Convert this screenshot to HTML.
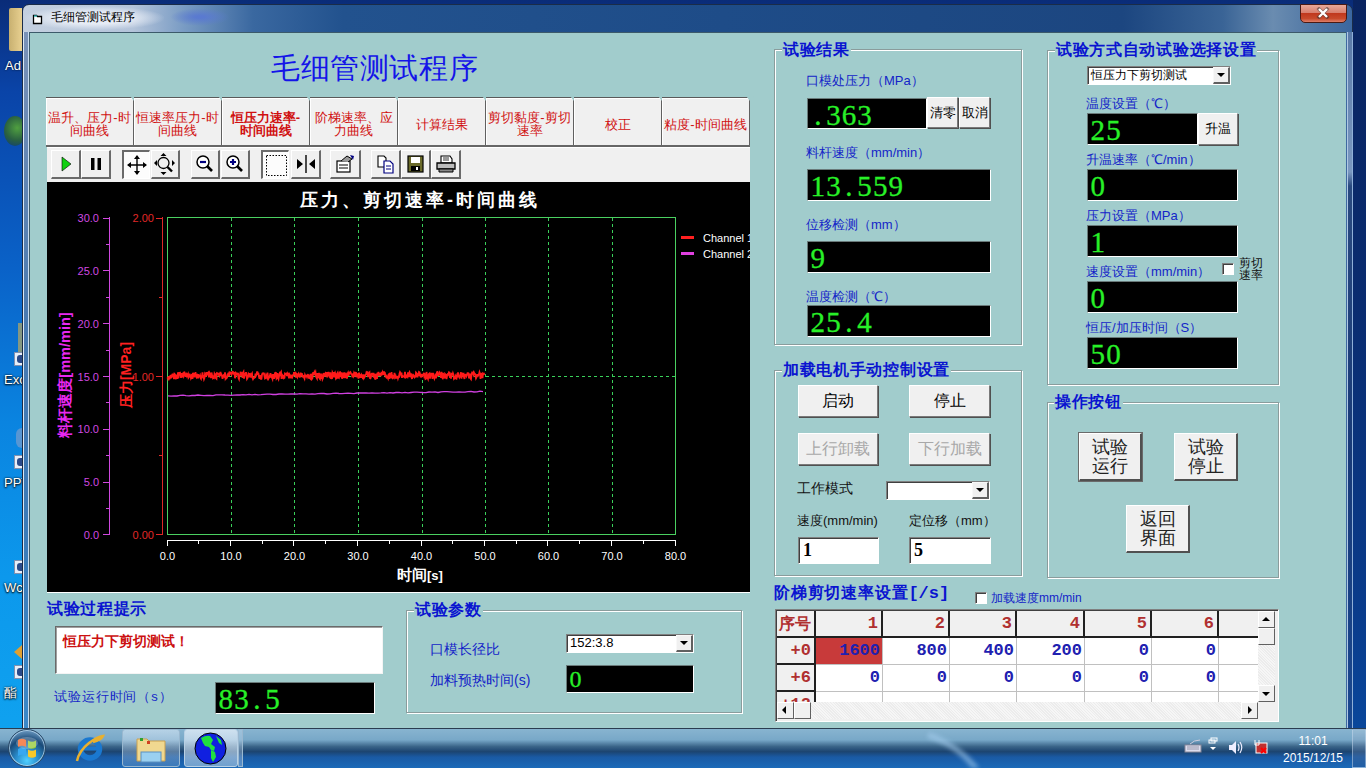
<!DOCTYPE html>
<html><head><meta charset="utf-8"><title>毛细管测试程序</title><style>
*{margin:0;padding:0;box-sizing:border-box}
html,body{width:1366px;height:768px;overflow:hidden}
body{position:relative;background:#0b3d9a;font-family:"Liberation Sans",sans-serif;}
.a{position:absolute}
#desk{left:0;top:0;width:1366px;height:768px;background:linear-gradient(180deg,#0a2c78 0%,#0a44a8 12%,#0a62c8 35%,#0a84e0 55%,#0c98ec 75%,#10a4f0 100%)}
#win{left:22px;top:4px;width:1331px;height:740px;border-radius:7px 7px 0 0;
 background:linear-gradient(90deg,#c4d0e0 0px,#b4c4da 110px,#7a9cc4 160px,#3a68a0 230px,#22528e 320px,#1e4c88 700px,#1c4680 1100px,#3a6496 1200px,#6a8cb0 1250px,#4a72a2 1300px,#3a66a0 1331px);border-top:1px solid #9ab4d4;
 border:1px solid #1a2c48}
#winL{left:23px;top:32px;width:6px;height:700px;border-left:1px solid #dce8f4;border-right:1px solid #c8dcf0;background:linear-gradient(180deg,#7a92b8 0%,#4a7ab0 40%,#3a7ab8 70%,#3a88c8 100%)}
#winR{left:1347px;top:32px;width:6px;height:700px;border-left:1px solid #b0c8e4;border-right:1px solid #90b0d8;background:linear-gradient(180deg,#5a7aa8 0%,#7a98c0 20%,#2a4a80 22%,#183a78 60%,#1a4890 100%)}
#deskR{left:1353px;top:0;width:13px;height:768px;background:linear-gradient(180deg,#0a2460 0%,#0a2c70 40%,#0a3c8c 80%,#0a4aa0 100%)}
#client{left:29px;top:32px;width:1317px;height:696px;background:#a1cccc;border-top:1px solid #3c5a6a;border-left:1px solid #3c5a6a}
#close{left:1300px;top:4px;width:47px;height:19px;border-radius:0 0 5px 5px;border:1px solid #4a1a14;
 background:linear-gradient(180deg,#e8a898 0%,#d88070 45%,#c0381e 50%,#c84a2c 80%,#e0806a 100%)}
#taskbar{left:0;top:728px;width:1366px;height:40px;border-top:1px solid #2a3c50;
 background:linear-gradient(180deg,#88b4d0 0%,#78a8c8 28%,#3a6488 45%,#1c4470 58%,#1a5aa4 72%,#1c6ab8 100%)}
.grp{position:absolute;border:1px solid #8a9c9c;box-shadow:inset 1px 1px 0 #fff,1px 1px 0 #fff}
.gt{position:absolute;background:#a1cccc;color:#0a14d0;font-weight:bold;font-size:16px;line-height:17px;padding:0 1px;white-space:nowrap;letter-spacing:0.7px}
.lbl{position:absolute;color:#1424c8;font-size:13px;line-height:16px;white-space:nowrap}
.disp{position:absolute;background:#000;border-top:1px solid #6a7a7a;border-left:1px solid #6a7a7a;border-right:1px solid #fff;border-bottom:1px solid #fff;color:#28f028;font-family:"Liberation Serif",serif;font-size:29px;line-height:33px;padding-left:2px;-webkit-text-stroke:0.3px #28f028;white-space:nowrap;overflow:hidden}
.disp span{display:inline-block;width:15.6px;text-align:center}
.btn{position:absolute;background:#f0f0f0;border-top:1px solid #fff;border-left:1px solid #fff;border-right:1px solid #7a7a7a;border-bottom:1px solid #7a7a7a;box-shadow:1px 1px 0 #505050;color:#000;text-align:center;white-space:nowrap;display:flex;align-items:center;justify-content:center}
.tab{position:absolute;top:97px;height:49px;background:#f0f0f0;border-top:1px solid #5a5a5a;border-right:1px solid #606060;box-shadow:inset 1px 1px 0 #fff;color:#d01010;font-size:13px;line-height:13px;text-align:center;display:flex;align-items:center;justify-content:center;white-space:nowrap;overflow:hidden}
.tb{position:absolute;top:150px;height:29px;background:#f0f0f0;border-top:1px solid #fff;border-left:1px solid #fff;border-right:2px solid #6a6a6a;border-bottom:2px solid #6a6a6a;display:flex;align-items:center;justify-content:center}
.tbp{background:#fcfcfc;border-top:2px solid #6a6a6a;border-left:2px solid #6a6a6a;border-right:1px solid #fff;border-bottom:1px solid #fff}
.combo{position:absolute;background:#fff;border-top:1px solid #808080;border-left:1px solid #808080;border-right:1px solid #fff;border-bottom:1px solid #fff;box-shadow:inset 1px 1px 0 #404040;font-size:12px;line-height:16px;white-space:nowrap;padding-left:3px;color:#000}
.combo i{position:absolute;right:0px;top:0px;bottom:0px;width:17px;background:#f0f0f0;border-top:1px solid #f8f8f8;border-left:1px solid #f8f8f8;border-right:2px solid #606060;border-bottom:2px solid #606060}
.combo i:after{content:"";position:absolute;left:3px;top:5px;border-left:4px solid transparent;border-right:4px solid transparent;border-top:4px solid #000}
.edit{position:absolute;background:#fff;border-top:1px solid #808080;border-left:1px solid #808080;border-right:1px solid #fff;border-bottom:1px solid #fff;box-shadow:inset 1px 1px 0 #404040;font-family:"Liberation Serif",serif;font-weight:bold;font-size:18px;line-height:24px;padding-left:4px;color:#000}
.chk{position:absolute;width:12px;height:12px;background:#fff;border-top:1px solid #808080;border-left:1px solid #808080;border-right:1px solid #fff;border-bottom:1px solid #fff;box-shadow:inset 1px 1px 0 #404040}
.gc{position:absolute;border-right:1px solid #c0c0c0;border-bottom:1px solid #c0c0c0;background:#fff;color:#2020b0;font-family:"Liberation Mono",monospace;font-weight:bold;font-size:17px;line-height:26px;text-align:right;padding-right:2px;white-space:nowrap;overflow:hidden}
.gh{position:absolute;background:#f0f0f0;border-right:2px solid #202020;border-bottom:2px solid #202020;color:#b03030;font-family:"Liberation Mono",monospace;font-weight:bold;font-size:17px;line-height:26px;text-align:right;padding-right:3px;white-space:nowrap;overflow:hidden}
.sb{position:absolute;background:#f0f0f0;border-top:1px solid #fff;border-left:1px solid #fff;border-right:1px solid #606060;border-bottom:1px solid #606060}
</style></head><body>
<div class="a" id="desk"></div><div class="a" id="deskR"></div>
<div class="a" style="left:9px;top:8px;width:13px;height:43px;background:linear-gradient(90deg,#c8b070,#e8d090);border-radius:2px 0 0 2px"></div>
<div class="a" style="left:5px;top:58px;color:#fff;font-size:13px;line-height:15px;text-shadow:0 0 2px #000">Ad</div>
<div class="a" style="left:4px;top:116px;width:22px;height:30px;border-radius:50%;background:radial-gradient(circle at 60% 40%,#50a040,#2a6040 55%,#0a3a80)"></div>
<div class="a" style="left:14px;top:352px;width:9px;height:14px;background:#e8eef8;border:1px solid #8090b0"></div>
<div class="a" style="left:17px;top:355px;width:5px;height:8px;background:#2a4a8a;border-radius:3px 0 0 3px"></div>
<div class="a" style="left:4px;top:372px;color:#fff;font-size:13px;line-height:15px;text-shadow:0 0 2px #000,0 1px 2px #000">Exc</div>
<div class="a" style="left:14px;top:455px;width:9px;height:14px;background:#e8eef8;border:1px solid #8090b0"></div>
<div class="a" style="left:17px;top:458px;width:5px;height:8px;background:#2a4a8a;border-radius:3px 0 0 3px"></div>
<div class="a" style="left:4px;top:475px;color:#fff;font-size:13px;line-height:15px;text-shadow:0 0 2px #000,0 1px 2px #000">PPT</div>
<div class="a" style="left:14px;top:560px;width:9px;height:14px;background:#e8eef8;border:1px solid #8090b0"></div>
<div class="a" style="left:17px;top:563px;width:5px;height:8px;background:#2a4a8a;border-radius:3px 0 0 3px"></div>
<div class="a" style="left:4px;top:580px;color:#fff;font-size:13px;line-height:15px;text-shadow:0 0 2px #000,0 1px 2px #000">Wc</div>
<div class="a" style="left:14px;top:665px;width:9px;height:14px;background:#e8eef8;border:1px solid #8090b0"></div>
<div class="a" style="left:17px;top:668px;width:5px;height:8px;background:#2a4a8a;border-radius:3px 0 0 3px"></div>
<div class="a" style="left:4px;top:685px;color:#fff;font-size:13px;line-height:15px;text-shadow:0 0 2px #000,0 1px 2px #000">酯</div>
<div class="a" style="left:18px;top:323px;width:4px;height:29px;background:#b8a860;opacity:.7"></div>
<div class="a" style="left:14px;top:645px;width:0;height:0;border-top:7px solid transparent;border-bottom:7px solid transparent;border-right:8px solid #e0a030"></div>
<div class="a" style="left:16px;top:428px;width:6px;height:20px;background:#6a9ad0;border-radius:6px 0 0 6px;opacity:.8"></div>
<div class="a" id="win"></div>
<div class="a" id="winL"></div><div class="a" id="winR"></div>
<div class="a" style="left:24px;top:6px;width:140px;height:24px;background:radial-gradient(ellipse at 50% 50%,rgba(235,240,248,.9) 35%,rgba(220,228,240,0) 72%)"></div>
<div class="a" style="left:170px;top:8px;width:60px;height:18px;background:radial-gradient(ellipse,#5a7ad0 10%,rgba(60,90,160,0) 70%)"></div>
<svg class="a" style="left:32px;top:13px" width="12" height="12" viewBox="0 0 12 12"><path d="M1.5 2.5h3l1 1h4v7h-8z" fill="#fff" stroke="#000" stroke-width="1.3"/><path d="M2 3h3" stroke="#3cc" stroke-width="1.2"/></svg>
<div class="a" style="left:51px;top:10px;color:#000;font-size:12px;line-height:14px;white-space:nowrap">毛细管测试程序</div>
<div class="a" id="close"></div>
<svg class="a" style="left:1316px;top:7px" width="14" height="12" viewBox="0 0 14 12"><path d="M3 2l8 8M11 2l-8 8" stroke="#333" stroke-width="3.6" stroke-linecap="square" opacity=".5"/><path d="M3 2l8 8M11 2l-8 8" stroke="#fff" stroke-width="2.4"/></svg>
<div class="a" id="client"></div>
<div class="a" style="left:271px;top:52px;color:#1414e8;font-size:29px;line-height:33px;white-space:nowrap;letter-spacing:0.6px">毛细管测试程序</div>
<div class="tab" style="left:46px;width:88px;"><div style="padding-top:4px">温升、压力-时<br>间曲线</div></div>
<div class="a" style="left:130px;top:96px;width:0;height:0;border-left:4px solid transparent;border-right:4px solid transparent;border-top:5px solid #a1cccc"></div>
<div class="tab" style="left:134px;width:88px;"><div style="padding-top:4px">恒速率压力-时<br>间曲线</div></div>
<div class="a" style="left:218px;top:96px;width:0;height:0;border-left:4px solid transparent;border-right:4px solid transparent;border-top:5px solid #a1cccc"></div>
<div class="tab" style="left:222px;width:88px;font-weight:bold;"><div style="padding-top:4px">恒压力速率-<br>时间曲线</div></div>
<div class="a" style="left:306px;top:96px;width:0;height:0;border-left:4px solid transparent;border-right:4px solid transparent;border-top:5px solid #a1cccc"></div>
<div class="tab" style="left:310px;width:88px;"><div style="padding-top:4px">阶梯速率、应<br>力曲线</div></div>
<div class="a" style="left:394px;top:96px;width:0;height:0;border-left:4px solid transparent;border-right:4px solid transparent;border-top:5px solid #a1cccc"></div>
<div class="tab" style="left:398px;width:88px;"><div style="padding-top:4px">计算结果</div></div>
<div class="a" style="left:482px;top:96px;width:0;height:0;border-left:4px solid transparent;border-right:4px solid transparent;border-top:5px solid #a1cccc"></div>
<div class="tab" style="left:486px;width:88px;"><div style="padding-top:4px">剪切黏度-剪切<br>速率</div></div>
<div class="a" style="left:570px;top:96px;width:0;height:0;border-left:4px solid transparent;border-right:4px solid transparent;border-top:5px solid #a1cccc"></div>
<div class="tab" style="left:574px;width:88px;"><div style="padding-top:4px">校正</div></div>
<div class="a" style="left:658px;top:96px;width:0;height:0;border-left:4px solid transparent;border-right:4px solid transparent;border-top:5px solid #a1cccc"></div>
<div class="tab" style="left:662px;width:88px;"><div style="padding-top:4px">粘度-时间曲线</div></div>
<div class="a" style="left:746px;top:96px;width:0;height:0;border-left:4px solid transparent;border-right:4px solid transparent;border-top:5px solid #a1cccc"></div>
<div class="a" style="left:42px;top:96px;width:0;height:0;border-left:4px solid #a1cccc;border-bottom:4px solid transparent;border-top:0"></div>
<div class="a" style="left:46px;top:145px;width:704px;height:2px;background:#666"></div>
<div class="a" style="left:47px;top:147px;width:703px;height:35px;background:#f0f0f0;border-top:1px solid #fff"></div>
<div class="tb" style="left:51px;width:30px;"><svg width="14" height="18" viewBox="0 0 14 18"><path d="M3 2v14l9-7z" fill="#10d010" stroke="#000" stroke-width=".6"/></svg></div>
<div class="tb" style="left:81px;width:30px;"><svg width="14" height="18" viewBox="0 0 14 18"><rect x="2" y="3" width="3.5" height="12" fill="#000"/><rect x="8.5" y="3" width="3.5" height="12" fill="#000"/></svg></div>
<div class="tb tbp" style="left:122px;width:28px;"><svg width="22" height="22" viewBox="0 0 22 22"><path d="M11 2v18M2 11h18" stroke="#000" stroke-width="1.4"/><path d="M11 1l-3 4h6zM11 21l-3-4h6zM1 11l4-3v6zM21 11l-4-3v6z" fill="#000"/></svg></div>
<div class="tb" style="left:151px;width:29px;"><svg width="24" height="24" viewBox="0 0 24 24"><circle cx="10.5" cy="11" r="5.5" fill="none" stroke="#000" stroke-width="1.3"/><path d="M14.5 15l4.5 4.5" stroke="#000" stroke-width="2.4"/><path d="M10.5 1l-3 3h6zM10.5 23l-3-3h6zM1 11l3-3v6zM22 11l-3-3v6z" fill="#000"/></svg></div>
<div class="tb" style="left:191px;width:29px;"><svg width="22" height="22" viewBox="0 0 22 22"><circle cx="9" cy="9" r="6" fill="#fff" stroke="#000" stroke-width="1.5"/><path d="M6 9h6" stroke="#000080" stroke-width="2.2"/><path d="M13 13l5 5" stroke="#000" stroke-width="2.6"/></svg></div>
<div class="tb" style="left:221px;width:29px;"><svg width="22" height="22" viewBox="0 0 22 22"><circle cx="9" cy="9" r="6" fill="#fff" stroke="#000" stroke-width="1.5"/><path d="M6 9h6M9 6v6" stroke="#000080" stroke-width="2.2"/><path d="M13 13l5 5" stroke="#000" stroke-width="2.6"/></svg></div>
<div class="tb tbp" style="left:261px;width:28px;"><svg width="22" height="22" viewBox="0 0 22 22"><rect x="1.5" y="1.5" width="20" height="20" fill="none" stroke="#000" stroke-width="1" stroke-dasharray="1.5 1.5"/></svg></div>
<div class="tb" style="left:291px;width:30px;"><svg width="20" height="22" viewBox="0 0 20 22"><path d="M10 2v18" stroke="#000" stroke-width="1.4"/><path d="M1 6v10l6-5zM19 6v10l-6-5z" fill="#000"/></svg></div>
<div class="tb" style="left:330px;width:31px;"><svg width="22" height="22" viewBox="0 0 22 22"><rect x="3" y="8" width="13" height="11" fill="#fff" stroke="#000" stroke-width="1.2"/><path d="M5 12h9M5 15h9" stroke="#000" stroke-width="1"/><path d="M7 8l6-5 5 3-4 3" fill="#999" stroke="#000" stroke-width="1"/><path d="M16 2l4 1-1 4z" fill="#000080"/></svg></div>
<div class="tb" style="left:371px;width:30px;"><svg width="22" height="22" viewBox="0 0 22 22"><path d="M3 3h6l2 2v9H3z" fill="#fff" stroke="#000" stroke-width="1.1"/><path d="M9 8h6l3 3v9H9z" fill="#fff" stroke="#000080" stroke-width="1.2"/><path d="M11 13h5M11 16h5" stroke="#000080"/></svg></div>
<div class="tb" style="left:401px;width:30px;"><svg width="22" height="22" viewBox="0 0 22 22"><rect x="3" y="3" width="15" height="16" fill="#6a6a2a" stroke="#000" stroke-width="1.2"/><rect x="6" y="4" width="9" height="6" fill="#fff"/><rect x="6" y="13" width="9" height="5" fill="#000"/><rect x="11" y="14" width="2" height="3" fill="#fff"/></svg></div>
<div class="tb" style="left:431px;width:30px;"><svg width="22" height="22" viewBox="0 0 22 22"><path d="M6 3h9l2 3v4H6z" fill="#fff" stroke="#000" stroke-width="1.1"/><path d="M2 10h18v6H2z" fill="#bbb" stroke="#000" stroke-width="1.3"/><path d="M4 16h14v3H4z" fill="#888" stroke="#000"/><path d="M8 5h6M8 7h6" stroke="#000" stroke-width=".8"/></svg></div>
<svg class="a" style="left:47px;top:182px" width="703" height="411" viewBox="47 182 703 411"><rect x="47" y="182" width="703" height="411" fill="#000"/><rect x="47" y="592" width="703" height="1" fill="#fff"/><text x="420" y="206" fill="#fff" font-size="18" font-weight="bold" text-anchor="middle" letter-spacing="3" font-family="Liberation Sans">压力、剪切速率-时间曲线</text><line x1="231.5" y1="218" x2="231.5" y2="534" stroke="#3ad05a" stroke-width="1" stroke-dasharray="3 3"/><line x1="294.5" y1="218" x2="294.5" y2="534" stroke="#3ad05a" stroke-width="1" stroke-dasharray="3 3"/><line x1="358.5" y1="218" x2="358.5" y2="534" stroke="#3ad05a" stroke-width="1" stroke-dasharray="3 3"/><line x1="422.5" y1="218" x2="422.5" y2="534" stroke="#3ad05a" stroke-width="1" stroke-dasharray="3 3"/><line x1="485.5" y1="218" x2="485.5" y2="534" stroke="#3ad05a" stroke-width="1" stroke-dasharray="3 3"/><line x1="548.5" y1="218" x2="548.5" y2="534" stroke="#3ad05a" stroke-width="1" stroke-dasharray="3 3"/><line x1="612.5" y1="218" x2="612.5" y2="534" stroke="#3ad05a" stroke-width="1" stroke-dasharray="3 3"/><line x1="168" y1="376.5" x2="675" y2="376.5" stroke="#3ad05a" stroke-width="1" stroke-dasharray="3 3"/><rect x="167.5" y="217.5" width="508.0" height="317.0" fill="none" stroke="#4ad060" stroke-width="1"/><line x1="109.5" y1="217" x2="109.5" y2="535" stroke="#d048e0" stroke-width="1"/><line x1="103" y1="218.5" x2="110" y2="218.5" stroke="#d048e0" stroke-width="1"/><line x1="106" y1="244.5" x2="110" y2="244.5" stroke="#d048e0" stroke-width="1"/><line x1="103" y1="270.5" x2="110" y2="270.5" stroke="#d048e0" stroke-width="1"/><line x1="106" y1="297.5" x2="110" y2="297.5" stroke="#d048e0" stroke-width="1"/><line x1="103" y1="323.5" x2="110" y2="323.5" stroke="#d048e0" stroke-width="1"/><line x1="106" y1="350.5" x2="110" y2="350.5" stroke="#d048e0" stroke-width="1"/><line x1="103" y1="376.5" x2="110" y2="376.5" stroke="#d048e0" stroke-width="1"/><line x1="106" y1="402.5" x2="110" y2="402.5" stroke="#d048e0" stroke-width="1"/><line x1="103" y1="429.5" x2="110" y2="429.5" stroke="#d048e0" stroke-width="1"/><line x1="106" y1="455.5" x2="110" y2="455.5" stroke="#d048e0" stroke-width="1"/><line x1="103" y1="482.5" x2="110" y2="482.5" stroke="#d048e0" stroke-width="1"/><line x1="106" y1="508.5" x2="110" y2="508.5" stroke="#d048e0" stroke-width="1"/><line x1="103" y1="534.5" x2="110" y2="534.5" stroke="#d048e0" stroke-width="1"/><text x="99" y="222.0" fill="#d048e0" font-size="11" text-anchor="end" font-family="Liberation Sans">30.0</text><text x="99" y="274.8" fill="#d048e0" font-size="11" text-anchor="end" font-family="Liberation Sans">25.0</text><text x="99" y="327.7" fill="#d048e0" font-size="11" text-anchor="end" font-family="Liberation Sans">20.0</text><text x="99" y="380.5" fill="#d048e0" font-size="11" text-anchor="end" font-family="Liberation Sans">15.0</text><text x="99" y="433.3" fill="#d048e0" font-size="11" text-anchor="end" font-family="Liberation Sans">10.0</text><text x="99" y="486.2" fill="#d048e0" font-size="11" text-anchor="end" font-family="Liberation Sans">5.0</text><text x="99" y="539.0" fill="#d048e0" font-size="11" text-anchor="end" font-family="Liberation Sans">0.0</text><line x1="162.5" y1="217" x2="162.5" y2="535" stroke="#e02828" stroke-width="1"/><line x1="156" y1="218.5" x2="163" y2="218.5" stroke="#e02828" stroke-width="1"/><line x1="159" y1="297.5" x2="163" y2="297.5" stroke="#e02828" stroke-width="1"/><line x1="156" y1="376.5" x2="163" y2="376.5" stroke="#e02828" stroke-width="1"/><line x1="159" y1="455.5" x2="163" y2="455.5" stroke="#e02828" stroke-width="1"/><line x1="156" y1="534.5" x2="163" y2="534.5" stroke="#e02828" stroke-width="1"/><text x="154" y="222.0" fill="#e02828" font-size="11" text-anchor="end" font-family="Liberation Sans">2.00</text><text x="154" y="380.5" fill="#e02828" font-size="11" text-anchor="end" font-family="Liberation Sans">1.00</text><text x="154" y="539.0" fill="#e02828" font-size="11" text-anchor="end" font-family="Liberation Sans">0.00</text><line x1="167" y1="540.5" x2="676" y2="540.5" stroke="#fff" stroke-width="1"/><line x1="167.5" y1="540" x2="167.5" y2="546" stroke="#fff" stroke-width="1"/><line x1="198.5" y1="540" x2="198.5" y2="544" stroke="#fff" stroke-width="1"/><line x1="230.5" y1="540" x2="230.5" y2="546" stroke="#fff" stroke-width="1"/><line x1="262.5" y1="540" x2="262.5" y2="544" stroke="#fff" stroke-width="1"/><line x1="293.5" y1="540" x2="293.5" y2="546" stroke="#fff" stroke-width="1"/><line x1="325.5" y1="540" x2="325.5" y2="544" stroke="#fff" stroke-width="1"/><line x1="357.5" y1="540" x2="357.5" y2="546" stroke="#fff" stroke-width="1"/><line x1="389.5" y1="540" x2="389.5" y2="544" stroke="#fff" stroke-width="1"/><line x1="421.5" y1="540" x2="421.5" y2="546" stroke="#fff" stroke-width="1"/><line x1="452.5" y1="540" x2="452.5" y2="544" stroke="#fff" stroke-width="1"/><line x1="484.5" y1="540" x2="484.5" y2="546" stroke="#fff" stroke-width="1"/><line x1="516.5" y1="540" x2="516.5" y2="544" stroke="#fff" stroke-width="1"/><line x1="547.5" y1="540" x2="547.5" y2="546" stroke="#fff" stroke-width="1"/><line x1="579.5" y1="540" x2="579.5" y2="544" stroke="#fff" stroke-width="1"/><line x1="611.5" y1="540" x2="611.5" y2="546" stroke="#fff" stroke-width="1"/><line x1="643.5" y1="540" x2="643.5" y2="544" stroke="#fff" stroke-width="1"/><line x1="675.5" y1="540" x2="675.5" y2="546" stroke="#fff" stroke-width="1"/><text x="167.5" y="560" fill="#fff" font-size="11" text-anchor="middle" font-family="Liberation Sans">0.0</text><text x="231.0" y="560" fill="#fff" font-size="11" text-anchor="middle" font-family="Liberation Sans">10.0</text><text x="294.5" y="560" fill="#fff" font-size="11" text-anchor="middle" font-family="Liberation Sans">20.0</text><text x="358.0" y="560" fill="#fff" font-size="11" text-anchor="middle" font-family="Liberation Sans">30.0</text><text x="421.5" y="560" fill="#fff" font-size="11" text-anchor="middle" font-family="Liberation Sans">40.0</text><text x="485.0" y="560" fill="#fff" font-size="11" text-anchor="middle" font-family="Liberation Sans">50.0</text><text x="548.5" y="560" fill="#fff" font-size="11" text-anchor="middle" font-family="Liberation Sans">60.0</text><text x="612.0" y="560" fill="#fff" font-size="11" text-anchor="middle" font-family="Liberation Sans">70.0</text><text x="675.5" y="560" fill="#fff" font-size="11" text-anchor="middle" font-family="Liberation Sans">80.0</text><text x="397" y="580" fill="#fff" font-size="15" font-weight="bold" font-family="Liberation Sans">时间<tspan font-size="13">[s]</tspan></text><text transform="translate(70,375) rotate(-90)" fill="#e828f0" font-size="14.5" font-weight="bold" text-anchor="middle" font-family="Liberation Sans">料杆速度[mm/min]</text><text transform="translate(131,375) rotate(-90)" fill="#ff2020" font-size="14" font-weight="bold" text-anchor="middle" font-family="Liberation Sans">压力[MPa]</text><rect x="681" y="236" width="13" height="3" fill="#ff2020"/><rect x="681" y="252" width="13" height="3" fill="#e040e0"/><text x="703" y="241.5" fill="#fff" font-size="11" font-family="Liberation Sans">Channel 1</text><text x="703" y="257.5" fill="#fff" font-size="11" font-family="Liberation Sans">Channel 2</text><polyline points="167.5,378.5 168.0,377.0 168.5,380.4 169.0,376.0 169.5,379.1 170.0,377.7 170.5,375.2 171.0,378.3 171.5,374.6 172.0,377.3 172.5,374.4 173.0,374.4 173.5,376.5 174.0,379.2 174.5,373.9 175.0,374.4 175.5,377.1 176.0,379.2 176.5,376.3 177.0,374.8 177.5,378.9 178.0,372.2 178.5,378.1 179.0,374.0 179.5,372.9 180.0,372.7 180.5,374.1 181.0,377.8 181.5,373.2 182.0,376.1 182.5,376.5 183.0,374.6 183.5,375.8 184.0,372.4 184.5,372.3 185.0,373.4 185.5,376.8 186.0,375.0 186.5,374.2 187.0,376.1 187.5,375.2 188.0,374.1 188.5,377.6 189.0,376.9 189.5,373.7 190.0,376.0 190.5,375.7 191.0,378.2 191.5,377.2 192.0,374.0 192.5,379.0 193.0,372.8 193.5,374.9 194.0,377.4 194.5,373.0 195.0,375.4 195.5,372.2 196.0,376.7 196.5,377.4 197.0,376.0 197.5,378.2 198.0,374.2 198.5,376.9 199.0,376.2 199.5,376.1 200.0,375.2 200.5,377.9 201.0,378.7 201.5,375.3 202.0,376.7 202.5,372.3 203.0,377.0 203.5,376.6 204.0,379.1 204.5,377.8 205.0,373.9 205.5,374.7 206.0,376.7 206.5,372.1 207.0,375.2 207.5,373.1 208.0,372.7 208.5,372.3 209.0,377.4 209.5,372.8 210.0,373.7 210.5,374.7 211.0,378.2 211.5,372.5 212.0,375.1 212.5,375.9 213.0,378.3 213.5,377.8 214.0,378.1 214.5,373.9 215.0,374.9 215.5,374.5 216.0,378.3 216.5,378.8 217.0,373.0 217.5,373.2 218.0,373.6 218.5,373.6 219.0,375.4 219.5,376.1 220.0,373.8 220.5,371.9 221.0,374.9 221.5,374.6 222.0,376.0 222.5,378.8 223.0,376.9 223.5,375.6 224.0,376.3 224.5,376.8 225.0,372.3 225.5,378.4 226.0,377.5 226.5,378.2 227.0,377.6 227.5,374.7 228.0,374.8 228.5,372.6 229.0,376.5 229.5,372.3 230.0,372.4 230.5,373.4 231.0,373.1 231.5,374.3 232.0,372.3 232.5,371.9 233.0,373.0 233.5,372.6 234.0,374.5 234.5,372.1 235.0,378.2 235.5,376.3 236.0,373.0 236.5,373.7 237.0,374.4 237.5,374.5 238.0,372.8 238.5,378.0 239.0,379.1 239.5,375.3 240.0,375.4 240.5,372.5 241.0,372.6 241.5,374.4 242.0,373.8 242.5,377.9 243.0,373.1 243.5,372.1 244.0,378.7 244.5,375.7 245.0,373.0 245.5,375.8 246.0,372.1 246.5,375.7 247.0,378.9 247.5,378.1 248.0,376.9 248.5,373.8 249.0,374.5 249.5,373.1 250.0,377.5 250.5,375.7 251.0,377.5 251.5,374.3 252.0,373.5 252.5,377.7 253.0,379.0 253.5,378.0 254.0,377.7 254.5,377.8 255.0,377.2 255.5,373.5 256.0,375.6 256.5,374.5 257.0,372.1 257.5,372.1 258.0,373.9 258.5,373.8 259.0,376.9 259.5,378.8 260.0,375.1 260.5,378.6 261.0,379.0 261.5,378.8 262.0,374.5 262.5,373.5 263.0,373.5 263.5,373.3 264.0,373.4 264.5,376.4 265.0,378.4 265.5,378.0 266.0,375.4 266.5,376.6 267.0,377.7 267.5,372.5 268.0,376.7 268.5,378.5 269.0,377.5 269.5,377.3 270.0,375.3 270.5,373.2 271.0,377.6 271.5,374.3 272.0,377.7 272.5,378.9 273.0,374.8 273.5,374.8 274.0,378.7 274.5,377.1 275.0,373.1 275.5,372.8 276.0,373.0 276.5,378.4 277.0,377.7 277.5,373.0 278.0,377.9 278.5,379.0 279.0,376.6 279.5,374.4 280.0,375.9 280.5,372.8 281.0,372.0 281.5,378.9 282.0,376.6 282.5,375.7 283.0,378.6 283.5,375.0 284.0,378.2 284.5,377.8 285.0,373.4 285.5,373.7 286.0,374.0 286.5,373.6 287.0,376.1 287.5,373.8 288.0,374.9 288.5,372.8 289.0,378.5 289.5,374.4 290.0,375.2 290.5,376.1 291.0,378.4 291.5,374.9 292.0,378.5 292.5,375.5 293.0,375.7 293.5,375.7 294.0,372.0 294.5,375.1 295.0,373.2 295.5,371.9 296.0,377.7 296.5,373.1 297.0,375.3 297.5,377.1 298.0,375.9 298.5,374.2 299.0,375.6 299.5,375.9 300.0,377.5 300.5,372.7 301.0,375.9 301.5,373.7 302.0,373.9 302.5,377.5 303.0,375.6 303.5,375.9 304.0,377.4 304.5,378.5 305.0,375.1 305.5,376.3 306.0,375.5 306.5,375.6 307.0,376.9 307.5,375.2 308.0,375.7 308.5,375.3 309.0,378.7 309.5,376.9 310.0,378.2 310.5,378.7 311.0,373.8 311.5,375.9 312.0,378.7 312.5,377.9 313.0,372.9 313.5,372.8 314.0,375.1 314.5,372.4 315.0,373.6 315.5,372.4 316.0,376.7 316.5,377.5 317.0,378.4 317.5,373.0 318.0,377.1 318.5,376.7 319.0,372.9 319.5,378.3 320.0,378.9 320.5,373.5 321.0,378.8 321.5,374.8 322.0,375.4 322.5,379.0 323.0,377.9 323.5,373.1 324.0,375.0 324.5,375.6 325.0,374.3 325.5,373.3 326.0,374.2 326.5,377.1 327.0,372.0 327.5,375.9 328.0,375.1 328.5,372.0 329.0,374.3 329.5,376.4 330.0,375.6 330.5,372.4 331.0,379.0 331.5,377.6 332.0,378.9 332.5,372.7 333.0,373.8 333.5,372.2 334.0,377.5 334.5,373.8 335.0,372.8 335.5,374.9 336.0,378.5 336.5,377.8 337.0,373.8 337.5,373.0 338.0,378.5 338.5,376.0 339.0,376.9 339.5,372.5 340.0,372.3 340.5,376.9 341.0,375.0 341.5,372.4 342.0,378.7 342.5,376.5 343.0,377.7 343.5,372.5 344.0,378.1 344.5,372.4 345.0,378.1 345.5,375.2 346.0,374.3 346.5,375.9 347.0,378.6 347.5,373.8 348.0,372.8 348.5,375.7 349.0,373.6 349.5,372.7 350.0,373.1 350.5,372.3 351.0,373.4 351.5,374.1 352.0,374.1 352.5,377.4 353.0,374.0 353.5,375.5 354.0,373.2 354.5,374.4 355.0,372.0 355.5,373.7 356.0,372.0 356.5,377.2 357.0,375.9 357.5,373.3 358.0,375.3 358.5,378.6 359.0,372.7 359.5,377.8 360.0,375.0 360.5,375.5 361.0,377.9 361.5,374.7 362.0,375.5 362.5,376.9 363.0,379.0 363.5,374.4 364.0,377.9 364.5,377.0 365.0,376.5 365.5,374.8 366.0,374.4 366.5,372.3 367.0,372.8 367.5,372.4 368.0,377.2 368.5,373.7 369.0,373.1 369.5,372.5 370.0,378.0 370.5,378.2 371.0,376.7 371.5,373.9 372.0,373.6 372.5,374.0 373.0,375.2 373.5,373.0 374.0,375.1 374.5,373.8 375.0,378.8 375.5,378.9 376.0,375.8 376.5,373.7 377.0,378.9 377.5,374.1 378.0,374.5 378.5,371.9 379.0,374.6 379.5,375.3 380.0,375.5 380.5,373.3 381.0,375.5 381.5,371.9 382.0,373.8 382.5,372.5 383.0,374.8 383.5,372.2 384.0,372.1 384.5,374.1 385.0,373.6 385.5,376.1 386.0,375.7 386.5,377.3 387.0,376.6 387.5,377.1 388.0,378.2 388.5,374.7 389.0,374.2 389.5,379.0 390.0,373.0 390.5,377.1 391.0,376.5 391.5,372.2 392.0,377.9 392.5,378.3 393.0,376.4 393.5,377.2 394.0,377.7 394.5,372.9 395.0,375.7 395.5,375.5 396.0,377.9 396.5,377.7 397.0,377.9 397.5,376.1 398.0,378.3 398.5,376.8 399.0,376.9 399.5,373.6 400.0,372.1 400.5,372.9 401.0,374.5 401.5,372.7 402.0,377.9 402.5,375.9 403.0,376.4 403.5,376.4 404.0,376.8 404.5,375.4 405.0,371.9 405.5,377.6 406.0,377.3 406.5,375.5 407.0,375.8 407.5,376.6 408.0,372.4 408.5,377.2 409.0,373.7 409.5,372.4 410.0,373.8 410.5,377.2 411.0,373.4 411.5,377.2 412.0,378.9 412.5,375.5 413.0,374.7 413.5,375.3 414.0,376.8 414.5,377.4 415.0,376.3 415.5,376.5 416.0,372.5 416.5,373.0 417.0,373.7 417.5,377.3 418.0,374.1 418.5,376.0 419.0,372.0 419.5,372.3 420.0,373.8 420.5,376.7 421.0,376.9 421.5,376.8 422.0,374.0 422.5,375.6 423.0,375.2 423.5,375.3 424.0,372.8 424.5,378.3 425.0,373.3 425.5,378.9 426.0,378.6 426.5,372.0 427.0,375.2 427.5,377.8 428.0,378.9 428.5,375.1 429.0,373.8 429.5,373.4 430.0,378.7 430.5,373.4 431.0,376.1 431.5,372.9 432.0,375.7 432.5,378.8 433.0,372.9 433.5,377.8 434.0,375.6 434.5,378.3 435.0,377.0 435.5,373.6 436.0,378.4 436.5,375.4 437.0,372.1 437.5,371.9 438.0,375.4 438.5,375.1 439.0,374.1 439.5,372.9 440.0,374.4 440.5,374.2 441.0,377.9 441.5,371.9 442.0,377.3 442.5,377.9 443.0,372.8 443.5,378.6 444.0,377.0 444.5,378.4 445.0,374.0 445.5,374.6 446.0,374.7 446.5,379.1 447.0,376.1 447.5,374.5 448.0,375.0 448.5,373.9 449.0,372.2 449.5,372.6 450.0,377.9 450.5,374.0 451.0,378.6 451.5,373.7 452.0,373.8 452.5,375.6 453.0,373.3 453.5,374.6 454.0,378.8 454.5,378.3 455.0,377.7 455.5,376.4 456.0,378.5 456.5,378.7 457.0,375.9 457.5,377.1 458.0,372.3 458.5,377.2 459.0,375.1 459.5,377.3 460.0,376.5 460.5,374.0 461.0,372.3 461.5,378.6 462.0,372.8 462.5,375.3 463.0,374.4 463.5,374.0 464.0,377.2 464.5,378.9 465.0,373.8 465.5,376.6 466.0,374.1 466.5,375.9 467.0,374.7 467.5,373.1 468.0,373.1 468.5,373.4 469.0,378.4 469.5,375.5 470.0,373.5 470.5,378.4 471.0,379.1 471.5,375.1 472.0,372.9 472.5,373.3 473.0,372.6 473.5,374.4 474.0,372.6 474.5,373.6 475.0,373.8 475.5,376.0 476.0,378.3 476.5,377.3 477.0,374.9 477.5,374.9 478.0,375.7 478.5,374.6 479.0,374.3 479.5,372.3 480.0,373.9 480.5,378.9 481.0,372.8 481.5,375.5 482.0,376.4 482.5,378.1 483.0,373.5 483.5,373.9 484.0,373.7 484.5,374.8" fill="none" stroke="#ff1a1a" stroke-width="1.8"/><polyline points="168.0,395.8 171.0,396.1 174.0,396.0 177.0,396.0 180.0,395.3 183.0,395.2 186.0,395.7 189.0,395.8 192.0,395.5 195.0,395.5 198.0,395.0 201.0,395.3 204.0,395.7 207.0,395.5 210.0,395.5 213.0,395.6 216.0,394.9 219.0,394.8 222.0,394.8 225.0,395.0 228.0,395.1 231.0,395.3 234.0,395.1 237.0,395.0 240.0,395.0 243.0,394.7 246.0,394.8 249.0,394.3 252.0,394.9 255.0,394.4 258.0,394.9 261.0,394.7 264.0,394.3 267.0,394.2 270.0,394.2 273.0,394.5 276.0,394.5 279.0,394.0 282.0,393.9 285.0,394.2 288.0,394.2 291.0,394.0 294.0,393.9 297.0,394.1 300.0,393.6 303.0,393.8 306.0,393.9 309.0,394.2 312.0,394.0 315.0,394.1 318.0,393.7 321.0,393.5 324.0,393.5 327.0,394.0 330.0,393.8 333.0,393.4 336.0,393.1 339.0,393.5 342.0,393.6 345.0,393.3 348.0,393.2 351.0,393.4 354.0,393.6 357.0,393.0 360.0,392.8 363.0,393.0 366.0,393.0 369.0,393.2 372.0,392.8 375.0,393.2 378.0,393.1 381.0,392.9 384.0,392.6 387.0,393.2 390.0,392.6 393.0,393.0 396.0,392.5 399.0,392.4 402.0,392.8 405.0,392.4 408.0,392.9 411.0,392.5 414.0,392.2 417.0,392.2 420.0,392.3 423.0,392.5 426.0,392.6 429.0,392.0 432.0,392.1 435.0,391.9 438.0,392.5 441.0,391.8 444.0,391.7 447.0,391.7 450.0,391.9 453.0,392.2 456.0,392.2 459.0,392.0 462.0,392.2 465.0,392.1 468.0,391.6 471.0,391.4 474.0,392.0 477.0,391.8 480.0,391.2 483.0,391.6" fill="none" stroke="#d040e0" stroke-width="1.3"/></svg>
<div class="gt" style="left:46px;top:600px;">试验过程提示</div>
<div class="a" style="left:55px;top:626px;width:328px;height:48px;background:#fff;border-top:1px solid #6a6a6a;border-left:1px solid #6a6a6a;border-right:1px solid #f4f4f4;border-bottom:1px solid #f4f4f4;box-shadow:inset 1px 1px 0 #a0a0a0"></div>
<div class="a" style="left:63px;top:633px;color:#cc1010;font-weight:bold;font-size:14px;line-height:16px;white-space:nowrap">恒压力下剪切测试！</div>
<div class="lbl" style="left:54px;top:689px;letter-spacing:0.9px">试验运行时间（s）</div>
<div class="disp" style="left:215px;top:682px;width:160px;height:32px;"><span>8</span><span>3</span><span>.</span><span>5</span></div>
<div class="grp" style="left:406px;top:610px;width:336px;height:103px;"></div>
<div class="gt" style="left:414px;top:601px;">试验参数</div>
<div class="lbl" style="left:430px;top:642px;font-size:14px;line-height:15px">口模长径比</div>
<div class="combo" style="left:566px;top:634px;width:128px;height:19px;font-size:13px">152:3.8<i></i></div>
<div class="lbl" style="left:430px;top:673px;font-size:14px;line-height:15px">加料预热时间(s)</div>
<div class="disp" style="left:566px;top:665px;width:128px;height:28px;line-height:26px;font-size:24px"><span style="width:13px">0</span></div>
<div class="grp" style="left:774px;top:49px;width:248px;height:296px;"></div>
<div class="gt" style="left:782px;top:41px;">试验结果</div>
<div class="lbl" style="left:806px;top:73px;">口模处压力（MPa）</div>
<div class="disp" style="left:807px;top:98px;width:120px;height:31px;"><span>.</span><span>3</span><span>6</span><span>3</span></div>
<div class="btn" style="left:927px;top:97px;width:31px;height:31px;font-size:13px">清零</div>
<div class="btn" style="left:959px;top:97px;width:31px;height:31px;font-size:13px">取消</div>
<div class="lbl" style="left:806px;top:145px;">料杆速度（mm/min）</div>
<div class="disp" style="left:807px;top:169px;width:184px;height:32px;"><span>1</span><span>3</span><span>.</span><span>5</span><span>5</span><span>9</span></div>
<div class="lbl" style="left:806px;top:217px;">位移检测（mm）</div>
<div class="disp" style="left:807px;top:241px;width:184px;height:32px;"><span>9</span></div>
<div class="lbl" style="left:806px;top:289px;">温度检测（℃）</div>
<div class="disp" style="left:807px;top:305px;width:184px;height:32px;"><span>2</span><span>5</span><span>.</span><span>4</span></div>
<div class="grp" style="left:774px;top:370px;width:248px;height:206px;"></div>
<div class="gt" style="left:782px;top:361px;">加载电机手动控制设置</div>
<div class="btn" style="left:798px;top:385px;width:80px;height:32px;font-size:16px">启动</div>
<div class="btn" style="left:909px;top:385px;width:81px;height:32px;font-size:16px">停止</div>
<div class="btn" style="left:798px;top:433px;width:80px;height:32px;font-size:16px;color:#a8a8a8">上行卸载</div>
<div class="btn" style="left:909px;top:433px;width:81px;height:32px;font-size:16px;color:#a8a8a8">下行加载</div>
<div class="a" style="left:797px;top:481px;color:#111;font-size:14px;line-height:15px;white-space:nowrap">工作模式</div>
<div class="combo" style="left:886px;top:481px;width:104px;height:19px;"><i></i></div>
<div class="a" style="left:797px;top:513px;color:#111;font-size:13px;line-height:15px;white-space:nowrap">速度(mm/min)</div>
<div class="a" style="left:909px;top:513px;color:#111;font-size:13px;line-height:15px;white-space:nowrap">定位移（mm）</div>
<div class="edit" style="left:798px;top:537px;width:81px;height:27px;">1</div>
<div class="edit" style="left:909px;top:537px;width:82px;height:27px;">5</div>
<div class="grp" style="left:1047px;top:50px;width:232px;height:335px;"></div>
<div class="gt" style="left:1055px;top:41px;">试验方式自动试验选择设置</div>
<div class="combo" style="left:1087px;top:66px;width:144px;height:19px;">恒压力下剪切测试<i></i></div>
<div class="lbl" style="left:1086px;top:96px;">温度设置（℃）</div>
<div class="disp" style="left:1087px;top:113px;width:111px;height:32px;"><span>2</span><span>5</span></div>
<div class="btn" style="left:1198px;top:113px;width:40px;height:32px;font-size:13px">升温</div>
<div class="lbl" style="left:1086px;top:152px;">升温速率（℃/min）</div>
<div class="disp" style="left:1087px;top:169px;width:151px;height:32px;"><span>0</span></div>
<div class="lbl" style="left:1086px;top:208px;">压力设置（MPa）</div>
<div class="disp" style="left:1087px;top:225px;width:151px;height:32px;"><span>1</span></div>
<div class="lbl" style="left:1086px;top:264px;">速度设置（mm/min）</div>
<div class="chk" style="left:1222px;top:263px;"></div>
<div class="a" style="left:1239px;top:257px;color:#111;font-size:12px;line-height:12px;white-space:nowrap">剪切<br>速率</div>
<div class="disp" style="left:1087px;top:281px;width:151px;height:32px;"><span>0</span></div>
<div class="lbl" style="left:1086px;top:320px;">恒压/加压时间（S）</div>
<div class="disp" style="left:1087px;top:337px;width:151px;height:32px;"><span>5</span><span>0</span></div>
<div class="grp" style="left:1047px;top:402px;width:232px;height:176px;"></div>
<div class="gt" style="left:1054px;top:393px;">操作按钮</div>
<div class="btn" style="left:1079px;top:433px;width:63px;height:48px;font-size:18px;line-height:19px;color:#222;border:1px solid #fff;border-right:2px solid #505050;border-bottom:2px solid #505050;box-shadow:0 0 0 1px #6a6a6a">试验<br>运行</div>
<div class="btn" style="left:1174px;top:433px;width:64px;height:48px;font-size:18px;line-height:19px;color:#222;border:1px solid #fff;border-right:2px solid #505050;border-bottom:2px solid #505050;box-shadow:0 0 0 1px #6a6a6a;box-shadow:none">试验<br>停止</div>
<div class="btn" style="left:1126px;top:505px;width:64px;height:48px;font-size:18px;line-height:19px;color:#222;border:1px solid #fff;border-right:2px solid #505050;border-bottom:2px solid #505050;box-shadow:0 0 0 1px #6a6a6a;box-shadow:none">返回<br>界面</div>
<div class="a" style="left:774px;top:584px;color:#0a14d0;font-weight:bold;font-size:16px;line-height:17px;white-space:nowrap;letter-spacing:0.8px">阶梯剪切速率设置<span style="font-family:Liberation Mono;font-size:17px;letter-spacing:0">[/s]</span></div>
<div class="chk" style="left:975px;top:592px;"></div>
<div class="lbl" style="left:991px;top:590px;font-size:12px">加载速度mm/min</div>
<div class="a" style="left:775px;top:609px;width:504px;height:113px;background:#f0f0f0;border-top:1px solid #808080;border-left:1px solid #808080;border-right:1px solid #fff;border-bottom:1px solid #fff;box-shadow:inset 1px 1px 0 #404040"></div>
<div class="a" style="left:777px;top:611px;width:481px;height:91px;overflow:hidden;background:#fff">
<div class="gh" style="left:0px;top:0px;width:39px;height:27px;font-family:'Liberation Sans';text-align:left;padding-left:2px;font-size:16px;">序号</div>
<div class="gh" style="left:39px;top:0px;width:67px;height:27px;">1</div>
<div class="gh" style="left:106px;top:0px;width:67px;height:27px;">2</div>
<div class="gh" style="left:173px;top:0px;width:67px;height:27px;">3</div>
<div class="gh" style="left:240px;top:0px;width:68px;height:27px;">4</div>
<div class="gh" style="left:308px;top:0px;width:67px;height:27px;">5</div>
<div class="gh" style="left:375px;top:0px;width:67px;height:27px;">6</div>
<div class="gh" style="left:442px;top:0px;width:71px;height:27px;"></div>
<div class="gh" style="left:0px;top:27px;width:39px;height:27px;">+0</div>
<div class="gc" style="left:39px;top:27px;width:67px;height:27px;background:#c83a3a;">1600</div>
<div class="gc" style="left:106px;top:27px;width:67px;height:27px;">800</div>
<div class="gc" style="left:173px;top:27px;width:67px;height:27px;">400</div>
<div class="gc" style="left:240px;top:27px;width:68px;height:27px;">200</div>
<div class="gc" style="left:308px;top:27px;width:67px;height:27px;">0</div>
<div class="gc" style="left:375px;top:27px;width:67px;height:27px;">0</div>
<div class="gc" style="left:442px;top:27px;width:71px;height:27px;"></div>
<div class="gh" style="left:0px;top:54px;width:39px;height:27px;">+6</div>
<div class="gc" style="left:39px;top:54px;width:67px;height:27px;">0</div>
<div class="gc" style="left:106px;top:54px;width:67px;height:27px;">0</div>
<div class="gc" style="left:173px;top:54px;width:67px;height:27px;">0</div>
<div class="gc" style="left:240px;top:54px;width:68px;height:27px;">0</div>
<div class="gc" style="left:308px;top:54px;width:67px;height:27px;">0</div>
<div class="gc" style="left:375px;top:54px;width:67px;height:27px;">0</div>
<div class="gc" style="left:442px;top:54px;width:71px;height:27px;"></div>
<div class="gh" style="left:0px;top:81px;width:39px;height:27px;">+12</div>
<div class="gc" style="left:39px;top:81px;width:67px;height:27px;"></div>
<div class="gc" style="left:106px;top:81px;width:67px;height:27px;"></div>
<div class="gc" style="left:173px;top:81px;width:67px;height:27px;"></div>
<div class="gc" style="left:240px;top:81px;width:68px;height:27px;"></div>
<div class="gc" style="left:308px;top:81px;width:67px;height:27px;"></div>
<div class="gc" style="left:375px;top:81px;width:67px;height:27px;"></div>
<div class="gc" style="left:442px;top:81px;width:71px;height:27px;"></div>
</div>
<div class="a" style="left:777px;top:702px;width:481px;height:17px;background:repeating-linear-gradient(45deg,#f6f6f6 0 1px,#ececec 1px 2px)"></div>
<div class="sb" style="left:777px;top:702px;width:17px;height:17px;"></div>
<div class="a" style="left:782px;top:706px;width:0;height:0;border-top:4px solid transparent;border-bottom:4px solid transparent;border-right:4px solid #000"></div>
<div class="sb" style="left:794px;top:702px;width:17px;height:17px;"></div>
<div class="sb" style="left:1241px;top:702px;width:17px;height:17px;"></div>
<div class="a" style="left:1248px;top:706px;width:0;height:0;border-top:4px solid transparent;border-bottom:4px solid transparent;border-left:4px solid #000"></div>
<div class="a" style="left:1258px;top:611px;width:17px;height:91px;background:repeating-linear-gradient(45deg,#f6f6f6 0 1px,#ececec 1px 2px)"></div>
<div class="sb" style="left:1258px;top:611px;width:17px;height:17px;"></div>
<div class="a" style="left:1262px;top:617px;width:0;height:0;border-left:4px solid transparent;border-right:4px solid transparent;border-bottom:4px solid #000"></div>
<div class="sb" style="left:1258px;top:628px;width:17px;height:17px;"></div>
<div class="sb" style="left:1258px;top:685px;width:17px;height:17px;"></div>
<div class="a" style="left:1262px;top:692px;width:0;height:0;border-left:4px solid transparent;border-right:4px solid transparent;border-top:4px solid #000"></div>
<div class="a" style="left:1258px;top:702px;width:17px;height:17px;background:#f0f0f0"></div>
<div class="a" id="taskbar"></div>
<svg class="a" style="left:920px;top:729px;filter:blur(2px)" width="70" height="39" viewBox="0 0 70 39"><path d="M8 6q30 10 50 36" fill="none" stroke="#a8d0f0" stroke-width="6" opacity=".55"/></svg>
<div class="a" style="left:8px;top:729px;width:38px;height:38px;border-radius:50%;border:1px solid #2a4a68;box-shadow:inset 0 0 0 1px rgba(200,230,250,.7);background:radial-gradient(circle at 50% 85%,#50d0ff 0%,#2a90d0 30%,#1a4a78 60%,#6a98c0 85%,#c8e0f0 100%)"></div>
<svg class="a" style="left:13px;top:734px" width="28" height="28" viewBox="0 0 28 28"><path d="M5 6q4-2.5 8 0v7q-4-2.5-8 0z" fill="#f06020"/><path d="M15 6.5q4 2.5 8 0v7q-4 2.5-8 0z" fill="#90c830"/><path d="M5 15q4-2.5 8 0v7q-4-2.5-8 0z" fill="#38a8f0"/><path d="M15 15.5q4 2.5 8 0v7q-4 2.5-8 0z" fill="#f8c828"/><ellipse cx="14" cy="9" rx="11" ry="6" fill="#fff" opacity=".25"/></svg>
<svg class="a" style="left:73px;top:733px" width="32" height="31" viewBox="0 0 32 31"><ellipse cx="17" cy="16" rx="9.5" ry="9" fill="none" stroke="#1a78d0" stroke-width="5.5"/><path d="M9 15.5h16" stroke="#1a78d0" stroke-width="4"/><path d="M4 28q2-10 12-18q8-6 14-7q-2 4-10 6" fill="none" stroke="#e8b030" stroke-width="2.5"/></svg>
<div class="a" style="left:122px;top:729px;width:58px;height:38px;border-radius:3px;border:1px solid #9ab8d0;background:linear-gradient(180deg,rgba(220,235,248,.55),rgba(120,160,200,.35))"></div>
<svg class="a" style="left:135px;top:735px" width="32" height="28" viewBox="0 0 32 28"><path d="M2 4h10l2 2h16v20H2z" fill="#f0d890" stroke="#c8a050"/><rect x="6" y="17" width="20" height="10" fill="#9ad0f0" stroke="#5a90c0"/><rect x="5" y="3" width="3" height="3" fill="#30a030"/><rect x="12" y="6" width="3" height="3" fill="#d04020"/></svg>
<div class="a" style="left:184px;top:729px;width:54px;height:38px;border-radius:3px;border:1px solid #b8d0e4;background:linear-gradient(180deg,rgba(230,240,250,.75),rgba(170,200,225,.6))"></div>
<div class="a" style="left:238px;top:729px;width:5px;height:38px;border:1px solid #9ab8d0;background:rgba(200,220,240,.35)"></div>
<svg class="a" style="left:194px;top:732px" width="33" height="33" viewBox="0 0 33 33"><circle cx="16.5" cy="16.5" r="15.5" fill="#1020e0" stroke="#000" stroke-width="1"/><path d="M7 6q5-3 9-2l3 4-2 4 4 3-1 4-3-1-2-3-4-1-2-3z" fill="#20e040"/><path d="M17 18l4 2 1 5-3 5-2-4z" fill="#20e040"/><path d="M22 4l5 4 1 5-3-2z" fill="#20e040"/></svg>
<svg class="a" style="left:1184px;top:739px" width="18" height="14" viewBox="0 0 18 14"><rect x="1" y="6" width="16" height="7" fill="#dde" stroke="#889"/><path d="M3 8h12M3 10h12" stroke="#889" stroke-width=".8"/><path d="M6 5q4-4 10-4" fill="none" stroke="#ccd" stroke-width="1"/></svg>
<svg class="a" style="left:1207px;top:736px" width="12" height="18" viewBox="0 0 12 18"><rect x="2" y="4" width="6" height="3" fill="none" stroke="#fff"/><rect x="4" y="2" width="6" height="3" fill="none" stroke="#fff"/><path d="M3 11h6l-3 3z" fill="#fff"/></svg>
<svg class="a" style="left:1228px;top:740px" width="16" height="15" viewBox="0 0 16 15"><path d="M1 5h3l4-4v13l-4-4H1z" fill="#eef"/><path d="M10 4q2 3.5 0 7M12 2q3.5 5.5 0 11" fill="none" stroke="#eef" stroke-width="1.2"/></svg>
<svg class="a" style="left:1253px;top:739px" width="16" height="16" viewBox="0 0 16 16"><rect x="3" y="4" width="11" height="10" fill="#c03030" stroke="#fff"/><path d="M2 1v5h4V1" fill="none" stroke="#fff"/><path d="M8 9l5 5M13 9l-5 5" stroke="#f00" stroke-width="2"/></svg>
<div class="a" style="left:1280px;top:733px;width:66px;color:#fff;font-size:12px;line-height:17px;text-align:center;white-space:nowrap">11:01<br>2015/12/15</div>
<div class="a" style="left:1352px;top:729px;width:14px;height:39px;border:1px solid rgba(200,220,240,.5);background:linear-gradient(180deg,rgba(180,200,220,.35),rgba(40,80,140,.4))"></div>
</body></html>
